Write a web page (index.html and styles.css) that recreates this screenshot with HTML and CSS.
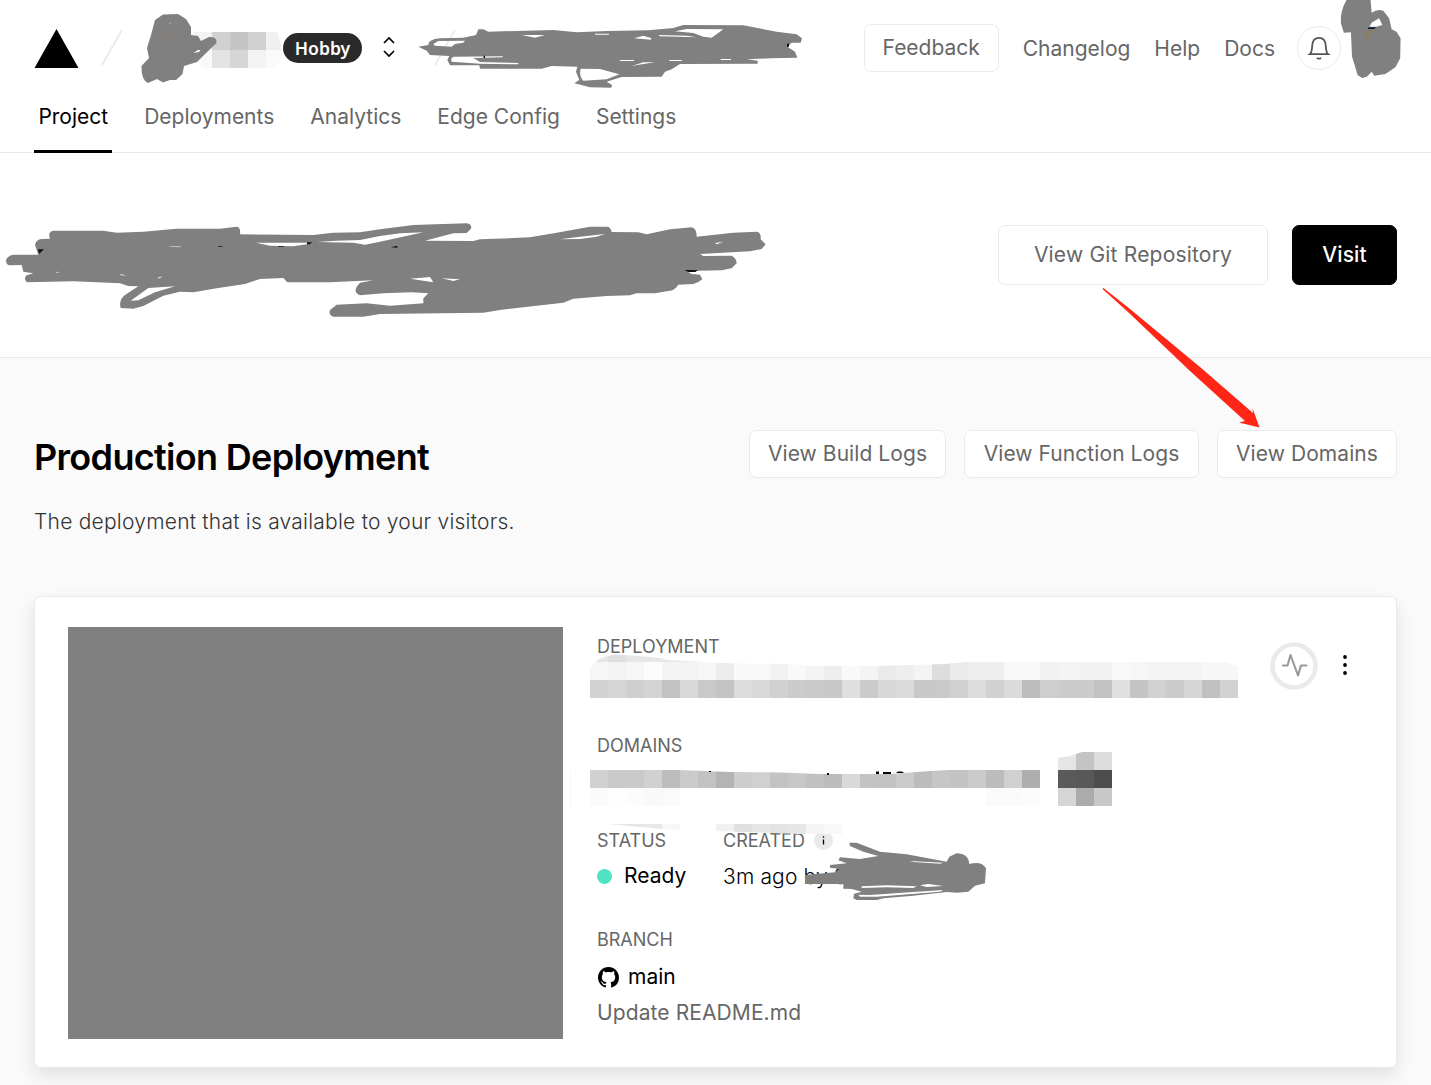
FILE: index.html
```html
<!DOCTYPE html>
<html lang="en">
<head>
<meta charset="utf-8">
<title>Project overview</title>
<link rel="stylesheet" href="styles.css">
</head>
<body>
<div class="page">
  <header class="header">
    <div class="topbar">
      <svg class="logo" viewBox="0 0 44 39"><path d="M22 0 44 39H0z"/></svg>
      <svg class="slash" viewBox="0 0 22 38"><path d="M21 1 1 36"/></svg>
      <span class="badge">Hobby</span>
      <svg class="switcher" viewBox="0 0 14 22"><path d="M2 7l5-5 5 5M2 15l5 5 5-5"/></svg>
      <svg class="slash slash-project" viewBox="0 0 22 38"><path d="M21 1 1 36"/></svg>
      <div class="actions">
        <a class="btn feedback">Feedback</a>
        <a class="link changelog">Changelog</a>
        <a class="link help">Help</a>
        <a class="link docs">Docs</a>
        <span class="bell"><svg viewBox="0 0 24 24"><path d="M2.8 18.2c2-1.5 2.2-4 2.4-8.200C5.400 4.800 8 1.800 12 1.800s6.600 3 6.800 8.200c.2 4.200.4 6.700 2.400 8.200z"/><path d="M10 21.700c.8 1.200 3.200 1.200 4 0"/></svg></span>
      </div>
    </div>
    <nav class="tabs">
      <a class="tab active">Project</a>
      <a class="tab deployments">Deployments</a>
      <a class="tab analytics">Analytics</a>
      <a class="tab edge">Edge Config</a>
      <a class="tab settings">Settings</a>
    </nav>
  </header>
  <section class="hero">
    <a class="btn large">View Git Repository</a>
    <a class="btn large primary">Visit</a>
  </section>
  <main class="main">
    <div class="heading">
      <div>
        <h1>Production Deployment</h1>
        <p class="sub">The deployment that is available to your visitors.</p>
      </div>
      <div class="buttons">
        <a class="btn build">View Build Logs</a>
        <a class="btn func">View Function Logs</a>
        <a class="btn domains">View Domains</a>
      </div>
    </div>
    <article class="card">
      <div class="preview"></div>
      <div class="details">
        <div class="field field-deployment"><span class="label l-deployment">DEPLOYMENT</span></div>
        <div class="field field-domains"><span class="label l-domains">DOMAINS</span></div>
        <div class="row">
          <div class="status">
            <span class="label l-status">STATUS</span>
            <div class="value"><i class="dot"></i><span class="ready">Ready</span></div>
          </div>
          <div>
            <div class="created"><span class="label l-created">CREATED</span><svg class="info" viewBox="0 0 19 19"><circle cx="9.500" cy="9.500" r="9.500" fill="#eaeaea"/><path d="M9.500 8.500v5M9.500 5.200v1.600" stroke="#000" stroke-width="1.300"/></svg></div>
            <div class="value ago">3m ago by S</div>
          </div>
        </div>
        <span class="label l-branch">BRANCH</span>
        <div class="value branch"><svg class="github" viewBox="0 0 16 16"><path d="M8 0C3.580 0 0 3.580 0 8c0 3.540 2.290 6.530 5.470 7.590.4.070.550-.170.550-.380 0-.190-.010-.820-.010-1.490-2.010.370-2.530-.490-2.690-.940-.090-.230-.480-.940-.820-1.130-.280-.150-.680-.520-.010-.530.630-.010 1.080.580 1.230.820.720 1.210 1.870.870 2.330.660.070-.520.280-.870.510-1.070-1.780-.2-3.640-.890-3.640-3.950 0-.870.310-1.590.820-2.150-.080-.2-.360-1.020.080-2.120 0 0 .670-.210 2.200.820.640-.180 1.320-.270 2-.270s1.360.090 2 .270c1.530-1.040 2.200-.820 2.200-.820.440 1.100.160 1.920.080 2.120.510.560.820 1.270.820 2.150 0 3.070-1.870 3.750-3.650 3.950.290.250.540.730.540 1.480 0 1.070-.010 1.930-.010 2.200 0 .210.150.460.550.380A8.010 8.010 0 0 0 16 8c0-4.420-3.580-8-8-8z"/></svg><span>main</span></div>
        <div class="commit">Update README.md</div>
      </div>
      <svg class="pulse" viewBox="0 0 48 48"><circle cx="24" cy="24" r="21.500"/><path d="M13 23.500h4.500L20.500 13l7.500 20.500 3-10h5.500"/></svg>
      <svg class="more" viewBox="0 0 6 22"><circle cx="3" cy="3" r="1.900"/><circle cx="3" cy="11" r="1.900"/><circle cx="3" cy="19" r="1.900"/></svg>
    </article>
  </main>

  <svg class="marks" viewBox="0 0 1431 1085">
    <defs>
      <clipPath id="c-user"><path d="M194 32H277Q281 40 281 50T276 68H203Q194 58 194 50z"/></clipPath>
      <clipPath id="c-url"><path d="M590 698V668Q598 656 615 654.500L640 656 660 658 668 660 720 663 790 664 810 666H880L945 664 967 662H1225L1238 666V698z"/></clipPath>
      <clipPath id="c-domain"><path d="M590 806V770H678L730 772 780 772.500 820 774H890L930 771 950 770H1040V806z"/></clipPath>
      <clipPath id="c-tail"><path d="M1058 806V758L1070 756 1082 752H1112V806z"/></clipPath>
      <clipPath id="c-status"><path d="M608 824H680V830L662 829z"/></clipPath>
      <clipPath id="c-created"><path d="M716 824H842V834H800L716 831z"/></clipPath>
    </defs>
    <g id="mosaics" shape-rendering="crispEdges"></g>
    <path fill="#000" d="M709 771h2v1h-2zM827 773h2v2h-2zM876 771.500h3v2.500h-3zM883 772h8v2h-8zM896 773l2-1.500h4l2 1.500z"/>
    <path fill="#f8f8f8" d="M570 770h1v40h-1z"/>
    <path fill="#808080" d="M155 20 163 14.500 178 14 186 19 191 27V35L198 36 201 41 209 37Q217 36 216.500 43L205 54 197 62 184 66 182.500 74 176 80 170 80 163 82.500 157 79 148 83Q141 80 141.500 66L149 58 147 48 151 35z"/>
    <path fill="#fff" d="M193.500 53 198 50H200.500L199 52z"/>
    <path fill="#9d7850" d="M167 34.500h6v1h-6zM163 45h2v1h-2z"/>
    <path fill="#bbb" d="M168 23.500 171 22.500V23.500z"/>
    <g transform="translate(410 0) scale(.33333)">
      <path fill="#808080" fill-rule="evenodd" d="M25 140 55 135Q55 118 90 115L160 113 198 105 205 88H220L235 95 430 90 500 97 590 93 715 91 790 84 820 75 1000 76 1100 95 1160 103 1176 115 1172 128H1145L1132 140 1155 155 1162 173 1080 175 1010 178 1043 182V191L810 192 785 208 765 215 755 230 635 231 590 245 606 255 604 263 540 262 493 250 508 240 498 215 502 200 425 198 395 206H210L208 196H120L112 180 118 168 60 165 50 152zM70 132 85 123 165 122 160 128 135 132 125 140 75 137zM125 185Q120 173 132 170L278 169V172L190 174 210 186 325 189V193L210 191zM512 206 570 207 628 223 590 238 520 242Q506 228 512 206M335 105H405L375 113zM672 115 700 107 725 115 722 119zM745 105 830 107 860 112 750 109zM795 94 830 87 940 88 905 113 880 110 850 99zM555 101H597V104H555zM630 180H672V183H630zM665 198 700 187 735 187 700 192zM932 177H963V180H932zM778 180H815V183H778z"/>
      <path fill="#000" d="M1131 131h6v9h-6zM221 167h4v7h-4z"/>
    </g>
    <g transform="translate(850 0) scale(.3705 .33333)">
      <path fill="#808080" d="M1340 0Q1322 35 1325 70L1333 98 1352 97 1355 170 1362 195 1370 225 1382 234 1395 230 1408 215 1415 227 1445 222 1472 202 1485 175 1486 115 1475 95 1462 88 1455 55 1440 33Q1425 25 1408 38L1405 0z"/>
      <path fill="#fff" d="M1402 80 1408 68 1428 55 1437 75 1420 80z"/>
      <path fill="#111b38" d="M1400 82h20l-5 5h-18z"/><path fill="#8d7c60" d="M1397 88 1415 87 1400 108 1385 138z"/>
    </g>
    <g transform="translate(0 210) scale(.33333)">
      <path fill="#808080" fill-rule="evenodd" d="M18 152Q20 138 40 134H115L105 105Q108 88 125 87L150 86Q142 65 160 62L310 62 350 68 430 65 530 56 660 56 710 50Q723 52 720 73L940 75 1000 68 1080 67 1140 58 1240 45 1400 40Q1417 43 1413 56L1400 69 1360 70 1275 92 1420 93 1440 88 1590 82 1670 68 1770 50H1820Q1832 50 1835 66L1915 67 1940 73 2010 58 2075 52Q2090 55 2090 80L2200 68 2270 65Q2284 66 2282 88L2297 103 2285 117 2250 124 2100 132 2110 138 2195 137Q2210 145 2210 160L2195 175 2165 181 2060 183 2075 192 2100 194 2107 208 2095 216 2080 222 2035 224Q2025 242 2005 243L1965 250H1910L1890 256 1820 258 1720 266 1690 278 1500 300 1450 308 1200 311 1140 312 1090 320H1000Q985 315 990 300L1010 284 1100 280 1170 287 1270 280V265L1285 250 1235 247 1150 250 1080 256Q1060 248 1070 230L1080 218 1120 211 990 217H862L850 204 780 207 735 222 650 235 580 247 540 245 490 257 430 288 400 296 362 294Q355 270 375 255L415 229 385 228 360 220 220 214 80 217Q70 205 80 196L100 190 70 185 65 165 30 166Q18 164 18 152zM392 272 445 234 525 229 465 247 415 271zM768 98H925L920 103 880 109 810 107zM950 96 1010 92 1080 90 1140 78 1200 70 1270 67 1140 95 1095 104 1060 98zM1230 206 1290 201 1300 217zM1325 205 1380 208 1360 213zM1680 88 1740 80 1815 72 1790 80 1740 87zM2145 99 2170 95 2150 103zM358 195 365 193 380 197zM470 205 487 199 480 205zM165 187 172 185 180 188z"/>
      <path fill="#111" d="M114 118h18l-15 14zM921 97h16l-8 6h-8zM1172 112l20-5v6zM2054 180h40l-8 6h-22zM655 108h12v2h-12zM835 108h16v2h-16z"/><path fill="#bbb" d="M505 111l10-3h30l-5 4z"/>
    </g>
    <g transform="translate(560 815) scale(.33333)">
      <path fill="#808080" fill-rule="evenodd" d="M735 180V207H790L850 207V221L875 222 905 230 882 236 880 250 890 255H950L970 250 1060 242 1160 231 1190 233 1225 230 1245 212 1275 205 1278 160Q1265 137 1228 147 1225 115 1190 115L1168 125 1160 140 1040 118 960 110 890 83H868L870 93 910 110 955 123 900 132 840 127 835 136 860 145 810 150V158L840 162 825 172zM1050 138 1150 143 1140 146 1060 141zM905 214 980 211 1070 214 1060 219 980 217 905 219zM895 239 930 240 1060 231 1150 225 1140 230 950 245 900 245zM1080 211 1105 207 1150 213 1100 216z"/>
    </g>
    <path fill="#ff2617" d="M1102.500 289 1103.500 288 1130 309 1200 367 1253 413 1252.500 408 1259.500 427.500 1239 422.500 1245 421 1190 371 1128 312z"/>
  </svg>
</div>
<script src="script.js"></script>
</body>
</html>
```
FILE: styles.css
```css
* { box-sizing: border-box; }
body { margin: 0; font-family: Inter, "Liberation Sans", sans-serif; font-size: 21px; background: #fafafa; color: #000; }
.page { position: relative; width: 1431px; height: 1085px; overflow: hidden; }
svg { display: block; flex: none; }
a { white-space: nowrap; }

.header { height: 153px; background: #fff; border-bottom: 1px solid #e6e6e6; }
.topbar { display: flex; align-items: center; height: 96px; padding: 0 34px; }
.logo { width: 45px; height: 39px; margin-top: 1px; }
.slash { width: 22px; height: 38px; margin-left: 22px; fill: none; stroke: #eaeaea; stroke-width: 1.8; }
.slash-project { margin-left: 38px; }
.badge { display: flex; align-items: center; justify-content: center; width: 79px; height: 30px; margin-left: 160px; border-radius: 15px; background: #2a2a2a; color: #fff; font: 600 17.6px/30px "Noto Sans", sans-serif; }
.switcher { width: 14px; height: 22px; margin: -3px 0 0 20px; fill: none; stroke: #000; stroke-width: 1.7; }
.actions { display: flex; align-items: center; margin-left: auto; margin-right: 56px; color: #666; }
.btn { display: flex; align-items: center; justify-content: center; height: 48px; padding-bottom: 1px; border: 1px solid #eaeaea; border-radius: 7px; background: #fff; color: #666; font-weight: 400; letter-spacing: .07px; }
.feedback { width: 135px; letter-spacing: 0; }
.link { margin-left: 24px; padding-top: 1px; }
.docs { margin-right: -1px; }
.bell { display: flex; align-items: center; justify-content: center; width: 44px; height: 44px; margin-left: 23px; border: 1px solid #eaeaea; border-radius: 50%; }
.bell svg { width: 24px; height: 24px; fill: none; stroke: #555; stroke-width: 1.8; }

.tabs { display: flex; gap: 28px; height: 57px; padding-left: 34.4px; color: #666; }
.tab { height: 57px; padding: 8px 4px 0; line-height: 26px; }
.active { color: #000; border-bottom: 3px solid #000; }

.hero { display: flex; justify-content: flex-end; align-items: center; gap: 24px; height: 205px; padding: 0 34px; background: #fff; border-bottom: 1px solid #eaeaea; }
.large { width: 270px; height: 60px; letter-spacing: .2px; }
.primary { width: 105px; background: #000; border-color: #000; color: #fff; font-weight: 500; letter-spacing: .1px; }

.main { padding: 72px 34px 0; }
.heading { display: flex; justify-content: space-between; height: 166px; }
h1 { margin: 5px 0 0; font-size: 36px; line-height: 44px; font-weight: 600; letter-spacing: -.68px; white-space: nowrap; }
.sub { margin: 30px 0 0; line-height: 26px; font-weight: 300; letter-spacing: .23px; color: #333; white-space: nowrap; }
.buttons { display: flex; gap: 18px; }
.build { width: 197px; }
.func { width: 235px; }
.domains { width: 180px; }

.card { display: flex; width: 1363px; height: 472px; padding: 30px 33px; border: 1px solid #eaeaea; border-radius: 7px; background: #fff; box-shadow: 0 8px 18px rgba(0,0,0,.1); }
.preview { flex: none; width: 495px; height: 412px; background: #808080; }
.details { flex: none; width: 640px; padding: 8px 0 0 34px; }
.label { display: block; font-size: 18px; line-height: 24px; color: #666; }
.field-deployment { height: 99px; }
.field-domains { height: 95px; }
.row { display: flex; height: 99px; }
.status { width: 126px; }
.created { display: flex; align-items: center; gap: 9px; }
.info { width: 19px; height: 19px; margin-top: -1px; }
.value { display: flex; align-items: center; height: 26px; margin-top: 10px; line-height: 26px; white-space: nowrap; }
.ago { font-weight: 300; margin-top: 11px; letter-spacing: .15px; }
.dot { width: 15px; height: 15px; margin-right: 12px; border-radius: 50%; background: #50e3c2; }
.branch { margin-top: 12px; }
.github { width: 21px; height: 21px; margin: 0 9px 0 1px; }
.commit { margin-top: 10px; line-height: 26px; color: #666; letter-spacing: .1px; }
.pulse { width: 48px; height: 48px; margin: 15px 0 0 67px; fill: none; stroke: #eaeaea; stroke-width: 4.6; }
.pulse path { stroke: #999; stroke-width: 2.1; stroke-linejoin: round; stroke-linecap: round; }
.more { width: 6px; height: 22px; margin: 27px 0 0 24px; }

.marks { position: absolute; left: 0; top: 0; width: 1431px; height: 1085px; pointer-events: none; }
```
FILE: script.js
```js
// Rows of 18px mosaic cells: clip id, x, y, height, grey levels.
const rows = [
  ["c-user", 194, 32, 18, "f2 d1 c5 d0 f0"],
  ["c-user", 194, 50, 18, "f9 e3 d6 f3 fa"],
  ["c-url", 590, 644, 18, "e6 df e7 e7 e8 e8 ea f4"],
  ["c-url", 590, 662, 18, "f6 f3 f6 fc f4 f3 f6 ec f9 f9 f2 f9 f3 ee f9 f3 ea ee f4 dd ea ee ee f9 f9 f1 f3 f2 f2 f8 f6 f4 f4 f3 f7 f7"],
  ["c-url", 590, 680, 18, "d3 d6 cf d4 c2 d9 c9 c4 dc d9 d1 cb c9 c8 df cb d8 db c8 c9 d0 dd d1 db bd ce cc cc c2 e0 c5 d2 cb d6 c0 d2"],
  ["c-domain", 590, 770, 18, "d1 ca ca d1 bd cb c2 b4 cd d0 c3 c7 c1 bc d9 c3 c2 cb bc c6 c3 cb bc d0 ae"],
  ["c-domain", 590, 788, 18, "fa fe fc f9 fa"],
  ["c-domain", 986, 788, 18, "fa fa fc"],
  ["c-tail", 1058, 752, 18, "e5 c4 dc"],
  ["c-tail", 1058, 770, 18, "5a 58 4d"],
  ["c-tail", 1058, 788, 18, "d5 ab c8"],
  ["c-status", 608, 824, 10, "e8 e6 e8 f7"],
  ["c-created", 716, 824, 10, "f1 e0 e6 e3 e6 f5 f8"]
];
document.getElementById("mosaics").innerHTML = rows.map(([clip, x, y, h, levels]) =>
  `<g clip-path="url(#${clip})">` + levels.split(" ").map((v, i) =>
    `<rect x="${x + i * 18}" y="${y}" width="18" height="${h}" fill="#${v}${v}${v}"/>`).join("") + "</g>"
).join("");
```
